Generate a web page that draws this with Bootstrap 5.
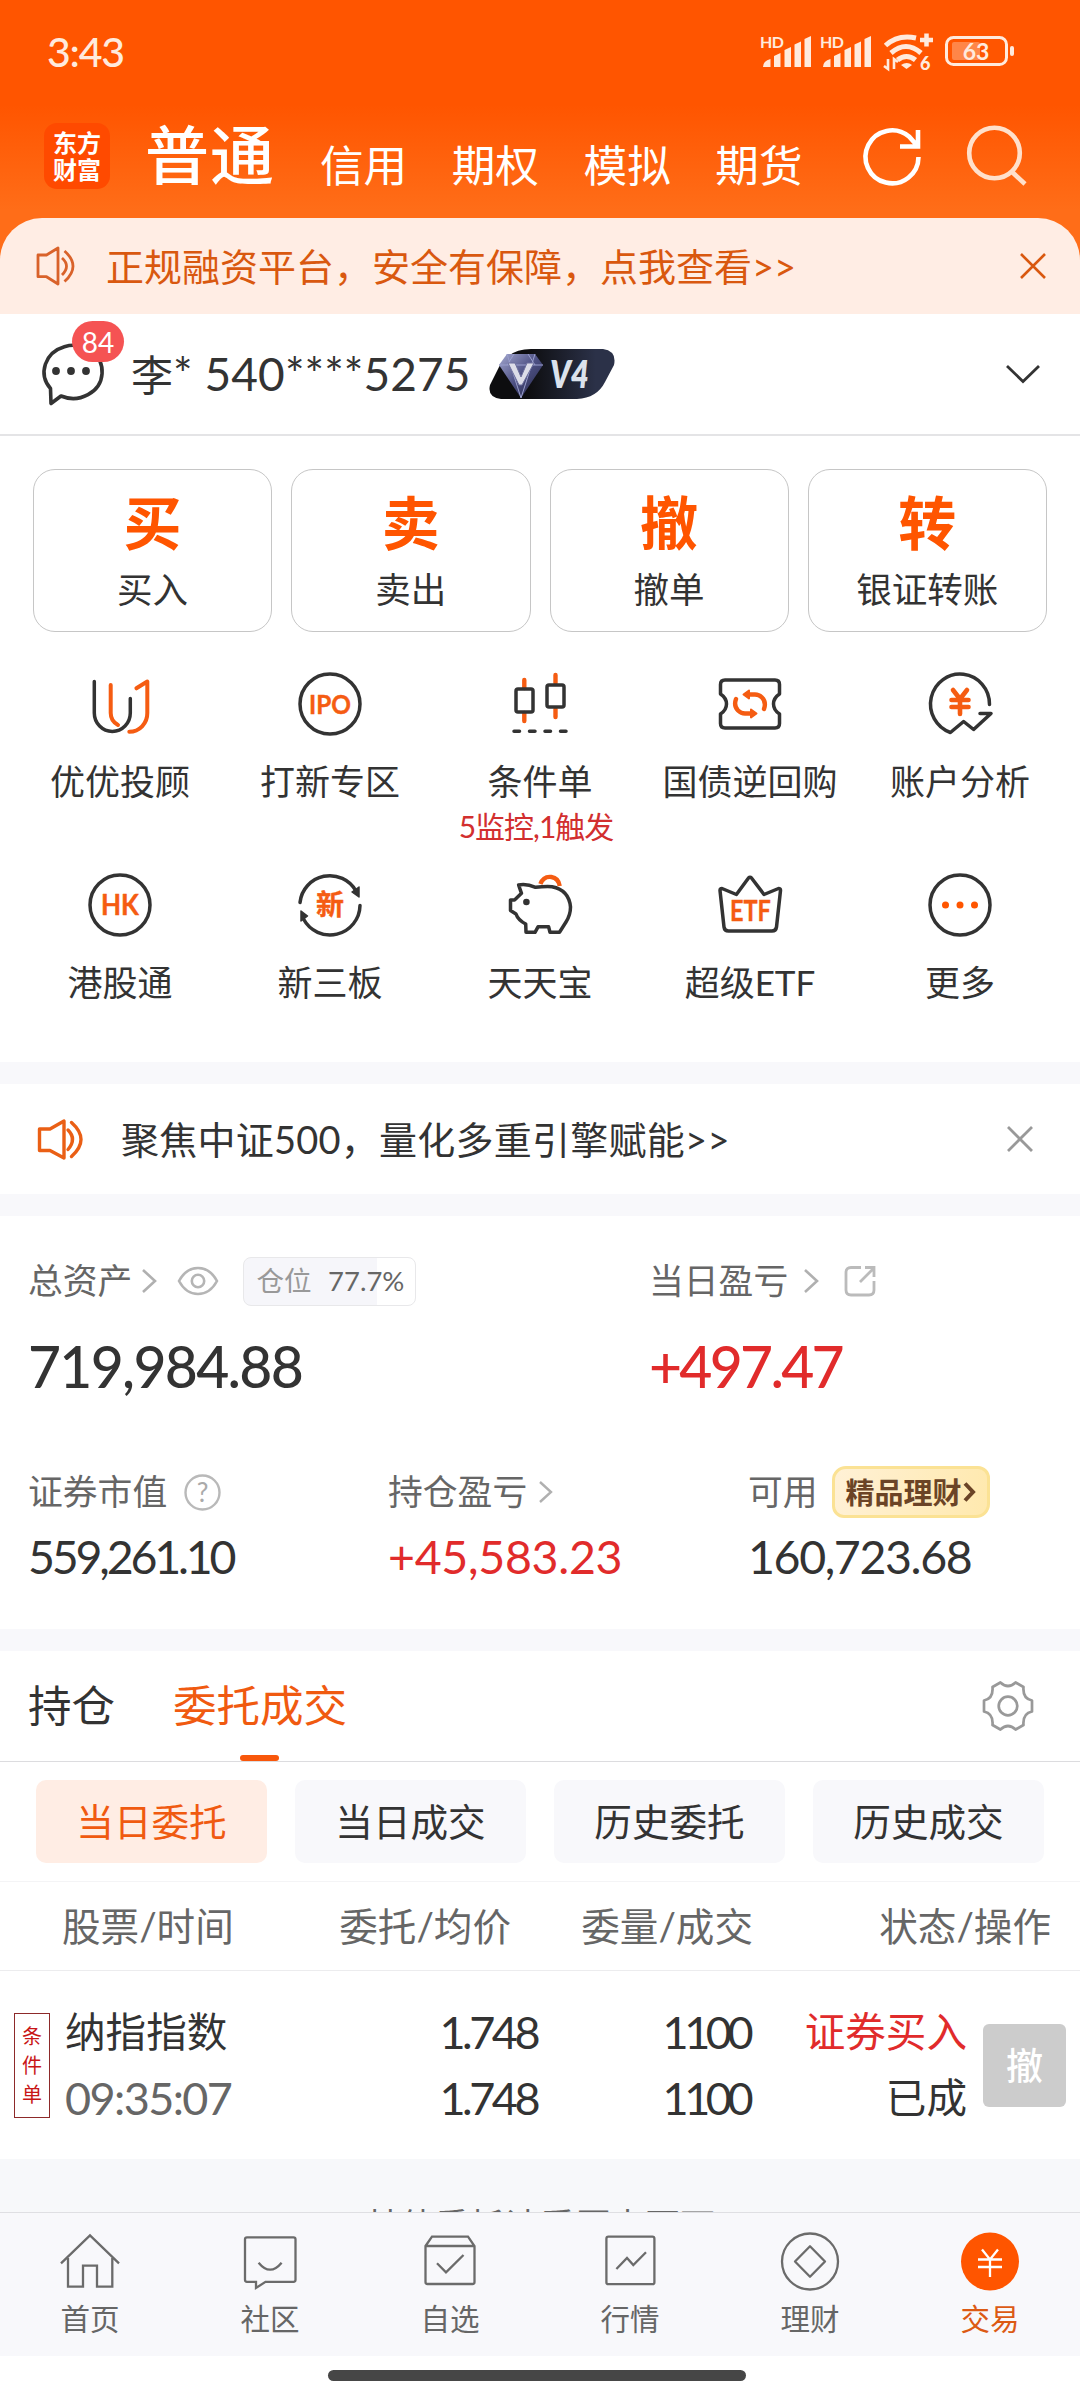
<!DOCTYPE html>
<html lang="zh-CN">
<head>
<meta charset="utf-8">
<meta name="viewport" content="width=device-width, initial-scale=1">
<title>交易</title>
<link href="https://cdn.jsdelivr.net/npm/bootstrap@5.3.0/dist/css/bootstrap.min.css" rel="stylesheet">
<style>
:root{--brand:#ff5500;--ink:#333;--sub:#666;--up:#e12b2b;--band:#f8f8fb}
body{font-family:Lato,"Noto Sans CJK SC",sans-serif;color:var(--ink);width:1080px;height:2400px;overflow:hidden;line-height:1;background:#fff}
svg{display:block;flex:none;overflow:visible}
.screen{height:2400px}
.top-area{height:314px;background:linear-gradient(#ff5500 0 105px,#ff6d18 210px)}
.status{height:104px;padding:0 66px 0 47px;color:#ffeadd}
.clock{font-size:41px;font-weight:500;letter-spacing:-1.2px;padding-bottom:2px}
.brand-row{height:114px;padding:0 55px 0 44px}
.logo{width:66px;height:66px;border-radius:13px;background:#ff4a00;color:#fff;font-weight:700;font-size:24px;line-height:27px;margin-top:-11px}
.big-tab{font-size:64px;margin:-12px 0 0 35px;font-weight:500;letter-spacing:1px}
.mid-tabs{font-size:43.6px;gap:44.6px;margin:10px 0 0 45px}
.notice{height:96px;border-radius:42px 42px 0 0;background:#ffede4;color:#d9580f;padding:0 34px 0 36px;font-size:38px}
.notice2{height:110px;padding:0 47px 0 37px;font-size:38px;letter-spacing:.25px}
.user-row{height:122px;border-bottom:2px solid #e4e4e6;padding:0 40px 0 38px}
.user-name{font-size:42px;margin-left:31px}
.user-name .num{font-size:46px;letter-spacing:.1px}
.msg-count{position:absolute;left:34px;top:-21px;width:52px;height:41px;border-radius:21px;background:#f55353;color:#fff;font-size:28px}
.quick{padding:33px 33px 0;gap:19px;height:196px}
.quick>div{flex:1 1 0;height:163px;border:1px solid #c6c6c6;border-radius:22px;padding-top:22px}
.quick b{font-size:58px;font-weight:700;color:var(--brand);line-height:62px}
.quick span{font-size:35.500px;margin-top:18px}
.svc{padding:40px 15px 0;height:430px}
.svc .cell{width:210px;height:201px}
.svc .cell span{font-size:35px;margin-top:27px;line-height:36px}
.svc .cell small{font-size:30px;color:#d22f2f;margin-top:12px;line-height:30px;letter-spacing:-1px;padding-right:8px}
.band{height:22px;background:var(--band);flex:none}
.assets{height:413px;padding:35px 28px 0}
.lbl{font-size:34.8px;color:var(--sub);height:60px}
.pos-tag{width:173px;height:49px;border:1.5px solid #e8e8ea;border-radius:8px;font-size:27.5px;color:var(--sub);background:linear-gradient(90deg,#f6f6fa 78%,#fff 78%);padding:0 11px 0 12px;margin-left:24px}
.total{font-size:57px;font-weight:500;height:60px;line-height:60px;margin-top:25px}
.val{font-size:46.5px;height:50px;line-height:50px;margin-top:9px}
.up{color:var(--up)}
.gold{width:158px;height:52px;border-radius:14px 12px 14px 12px;border:3px solid #fbe294;background:linear-gradient(100deg,#fff1d6,#ffe9ae);color:#6b4426;font-weight:700;font-size:29px;padding-left:11px;margin-left:14px}
.seg{height:111px;border-bottom:1.5px solid #dcdcdf;padding:0 47px 0 28px;font-size:43.5px}
.seg .on{color:#f05a10;margin-left:58px;height:100%}
.seg .on i{position:absolute;left:50%;bottom:0;width:39px;height:6px;margin-left:-20px;border-radius:3px;background:#f8570b}
.pills{height:120px;padding:0 36px;gap:28px;border-bottom:1px solid #f4f4f6}
.pills>div{flex:1 1 0;height:83px;border-radius:10px;background:var(--band);font-size:37.6px}
.pills>.on{background:#ffede4;color:#f05a10}
.thead-row{height:89px;border-bottom:1px solid #ececee;font-size:38.6px;color:var(--sub);padding-left:62px}
.order{height:188px;font-size:40.6px;padding-left:14px}
.order .ln{height:66px}
.order .num{font-size:45px}
.cond{width:36px;height:105px;border:1px solid #8d2a2a;color:#c81616;font-size:20px;line-height:29px}
.cancel{width:83px;height:83px;border-radius:6px;background:#ccc;color:#fff;font-size:37px;font-weight:500;margin-left:16px}
.tail{height:53px;background:#f7f8fa;overflow:hidden;color:var(--sub);font-size:35px}
.tail div{padding-top:49px}
.tabs-bottom{height:144px;background:var(--band);border-top:1px solid #dfdfe3;color:var(--sub);font-size:29.5px}
.tabs-bottom .it{width:180px;padding-top:18px}
.tabs-bottom .it span{margin-top:12px;line-height:32px}
.tabs-bottom svg{fill:none;stroke:#6b6b6b;stroke-width:2.3}
.home-bar{width:418px;height:11px;border-radius:6px;background:#464646;margin:14px 0 0 328px}
.ic{fill:none;stroke:#333;stroke-width:3.5;stroke-linecap:round;stroke-linejoin:round}
.ic .o{stroke:#f55c12}
.ic text{stroke:#f55c12;stroke-width:.4;fill:#f55c12;font-weight:700;text-anchor:middle}
</style>
</head>
<body>
<div class="screen d-flex flex-column">
  <header class="top-area flex-shrink-0">
    <div class="status d-flex align-items-center justify-content-between">
      <div class="clock">3:43</div>
      <svg width="256" height="40" viewBox="758 32 256 40" fill="#ffeadd">
        <g id="sig"><text x="760" y="48" font-size="16" font-weight="700" textLength="24">HD</text>
          <path d="M763 67q0-6 7.500-8v8zM774 56l6.500-3v14H774zM784.500 50l6.500-3v20h-6.500zM794.500 44.500l6.500-3V67h-6.500zM804.500 39l6.500-3V67h-6.500z"/></g>
        <use href="#sig" x="60"/>
        <g fill="none" stroke="#ffeadd" stroke-width="5"><path d="M885.500 45.500Q898 34 916 38M891 53q15-13 30 0M897.500 60q9-7 18 0"/></g>
        <path d="M901 65q6-4 11 0l-5.500 4z"/><path d="M920 40h13M926.500 33.500v13" stroke="#ffeadd" stroke-width="4.500"/>
        <path d="M888 59v10l-4-3M894 69V59l4 3" fill="none" stroke="#ffeadd" stroke-width="2.600"/>
        <text x="920" y="70" font-size="18" font-weight="900">6</text>
        <rect x="952" y="42" width="28" height="18" rx="2" fill="#ff8648"/>
        <rect x="946.500" y="37.500" width="60" height="27" rx="7" fill="none" stroke="#ffeadd" stroke-width="3"/>
        <rect x="1010" y="46" width="4" height="10" rx="2"/>
        <text x="976" y="60" font-size="23" font-weight="700" text-anchor="middle">63</text>
      </svg>
    </div>
    <div class="brand-row d-flex align-items-center text-white">
      <div class="logo d-flex flex-column align-items-center justify-content-center"><div>东方</div><div>财富</div></div>
      <div class="big-tab">普通</div>
      <div class="mid-tabs d-flex"><span>信用</span><span>期权</span><span>模拟</span><span>期货</span></div>
      <svg class="ms-auto" width="162" height="60" viewBox="863 126 162 60" style="margin-top:-11px" fill="none" stroke-width="4.600">
        <path d="M918.500 157A26.500 26.500 0 1 1 909 136.500l9 10M918 130v16.500h-18" stroke="#fff"/>
        <g stroke="#ffe0cb"><circle cx="994.500" cy="153" r="25.300"/><path d="M1011 171l14 13"/></g>
      </svg>
    </div>
    <div class="notice d-flex align-items-center">
      <svg width="40" height="40" fill="none" stroke="#d9622a" stroke-width="2.800" stroke-linejoin="round"><path d="M2 9h8.500L22 2v36l-11.500-7.300H2zM26 12q9 8 0 17M28.500 5q17 15 0 30.500"/></svg>
      <div style="margin-left:30px">正规融资平台，安全有保障，点我查看&gt;&gt;</div>
      <svg class="ms-auto" width="26" height="26" fill="none" stroke="#d9580f" stroke-width="2.600"><path d="M1 1l24 24M25 1L1 25"/></svg>
    </div>
  </header>

  <div class="user-row d-flex align-items-center flex-shrink-0">
    <div class="position-relative">
      <svg width="62" height="64" fill="none" stroke="#333" stroke-width="3.600"><path d="M12.500 46.500A29 26.500 0 1 1 23 54L13 61.500z" stroke-linejoin="round"/><g fill="#333" stroke="none"><circle cx="18" cy="29" r="3.900"/><circle cx="33" cy="29" r="3.900"/><circle cx="48" cy="29" r="3.900"/></g></svg>
      <div class="msg-count d-flex align-items-center justify-content-center">84</div>
    </div>
    <div class="user-name">李<span class="num">* 540****5275</span></div>
    <svg width="126" height="50" style="margin-left:18px">
      <defs><linearGradient id="pb"><stop offset=".3" stop-color="#0d0d0f"/><stop offset=".85" stop-color="#2b3148"/></linearGradient>
      <linearGradient id="dm" x2="1" y2="1"><stop stop-color="#a3a7cf"/><stop offset=".5" stop-color="#4c4f82"/><stop offset="1" stop-color="#232543"/></linearGradient></defs>
      <path d="M42 0h72q14 2 11 16l-9 17Q108 49 88 50H12Q-2 48 1 36l9-18Q20 0 42 0z" fill="url(#pb)"/>
      <path d="M18 5h28l8 11-22 33L10 16z" fill="url(#dm)"/><path d="M10 16h44M18 5l14 44L46 5M25 5l-7 11M39 5l7 11" stroke="#9a9fcd" stroke-width="1" fill="none"/>
      <path d="M19 14h7l6 14 6-14h7L33 36h-3z" fill="#dcdde8" stroke="#6c6f9c"/>
      <text x="61" y="39" font-size="38" font-weight="800" font-style="italic" fill="#dbe2ec" textLength="39" lengthAdjust="spacingAndGlyphs">V4</text>
    </svg>
    <svg class="ms-auto" width="34" height="18" fill="none" stroke="#333" stroke-width="2.800"><path d="M1 1l16 15.500L33 1"/></svg>
  </div>

  <section class="quick d-flex flex-shrink-0 text-center">
    <div class="d-flex flex-column"><b>买</b><span>买入</span></div>
    <div class="d-flex flex-column"><b>卖</b><span>卖出</span></div>
    <div class="d-flex flex-column"><b>撤</b><span>撤单</span></div>
    <div class="d-flex flex-column"><b>转</b><span>银证转账</span></div>
  </section>

  <section class="svc d-flex flex-wrap align-content-start flex-shrink-0">
    <div class="cell d-flex flex-column align-items-center">
      <svg class="ic" width="64" height="64"><path d="M6.300 9.500V41a18 18.500 0 0 0 36 0V26.500"/><path class="o" stroke-width="4" d="M22.700 13v28q0 8 7.300 12M48.400 16.300L59.300 9.500V41a18 18.500 0 0 1-18 18.800"/></svg>
      <span>优优投顾</span></div>
    <div class="cell d-flex flex-column align-items-center">
      <svg class="ic" width="64" height="64"><circle cx="32" cy="32" r="30"/><text x="32" y="41.500" font-size="27" textLength="42" lengthAdjust="spacingAndGlyphs" stroke-width="1">IPO</text></svg>
      <span>打新专区</span></div>
    <div class="cell d-flex flex-column align-items-center">
      <svg class="ic" width="64" height="64"><path class="o" stroke-width="4.400" d="M16.300 8v8M16.300 41v8M47.500 3v8M47.500 37v8"/><rect x="8" y="17" width="17" height="23" rx="2"/><rect x="39" y="13" width="17" height="22" rx="2"/><path d="M6 59.300h5.500M21.500 59.300H27M37 59.300h5.500M52.500 59.300H58"/></svg>
      <span>条件单</span><small>5监控,1触发</small></div>
    <div class="cell d-flex flex-column align-items-center">
      <svg class="ic" width="64" height="64"><path d="M7 8h50q4.500 0 4.500 4.500V22q-6 4-6 10t6 10v9.500q0 4.500-4.500 4.500H7q-4.500 0-4.500-4.500V42q6-4 6-10t-6-10v-9.500Q2.500 8 7 8z"/><g class="o" stroke-width="4.400"><path d="M18 27q-2.500 7 2 11.500 3 3 7 3H35M46 37q2.500-7-2-11.500-3-3-7-3H29"/><path d="M33 37.500l5.500 4-5.500 4zM31 18.500l-5.500 4 5.500 4z" fill="#f55c12" stroke-width="2"/></g></svg>
      <span>国债逆回购</span></div>
    <div class="cell d-flex flex-column align-items-center">
      <svg class="ic" width="64" height="64"><path d="M61.500 32.500A29.500 30 0 1 0 22.400 60.500L35.600 49.500l10 8L63 41.500H52"/><g class="o" stroke-width="4.600"><path d="M25 18l7 9 7-9M32 27v15M23.500 28h17M23.500 35h17"/></g></svg>
      <span>账户分析</span></div>
    <div class="cell d-flex flex-column align-items-center">
      <svg class="ic" width="64" height="64"><circle cx="32" cy="32" r="30"/><text x="32" y="42" font-size="28" textLength="38" lengthAdjust="spacingAndGlyphs">HK</text></svg>
      <span>港股通</span></div>
    <div class="cell d-flex flex-column align-items-center">
      <svg class="ic" width="64" height="64"><path d="M2 29.500A30 30 0 0 1 58 18M62 32.500A30 30 0 0 1 5.500 46"/><path d="M61 14v10l-7-5zM3 38v10l6.500-5z" fill="#333" stroke-width="1.500"/><text x="32" y="42" font-size="28">新</text></svg>
      <span>新三板</span></div>
    <div class="cell d-flex flex-column align-items-center">
      <svg class="ic" width="64" height="64"><path d="M10.600 12q8-1.500 17 2.300 9-1 16.400-.6Q61 17 62.500 34q0 8-4.500 15l-6.500 10.300H42l-1.400-5.500H30l-3 5.500h-9l-.3-8.300Q10 47 8 41l-5.500-3.500V27h4l7-6.700z"/><circle cx="18.400" cy="29" r="3.300" fill="#333" stroke="none"/><path class="o" stroke-width="4.400" stroke-linecap="butt" d="M32.400 11q3-8 11-7 7 1 8.300 9"/></svg>
      <span>天天宝</span></div>
    <div class="cell d-flex flex-column align-items-center">
      <svg class="ic" width="64" height="64"><path d="M4 15.500l14.400 6L30.500 5q1.500-1.500 3 0L46 21.500l14.500-6q2.200 0 2 2L58.500 54q-.5 4-4.500 4H10.500q-4 0-4.500-4L2 17.500q0-2 2-2z"/><text x="32.400" y="47.500" font-size="28" textLength="41" lengthAdjust="spacingAndGlyphs">ETF</text></svg>
      <span>超级ETF</span></div>
    <div class="cell d-flex flex-column align-items-center">
      <svg class="ic" width="64" height="64"><circle cx="32" cy="32" r="30"/><g fill="#ff5500" stroke="none"><circle cx="17.500" cy="32" r="3.500"/><circle cx="32" cy="32" r="3.500"/><circle cx="46.500" cy="32" r="3.500"/></g></svg>
      <span>更多</span></div>
  </section>

  <div class="band"></div>
  <div class="notice2 d-flex align-items-center flex-shrink-0">
    <svg width="48" height="43" fill="none" stroke="#ea5f15" stroke-width="3.400" stroke-linejoin="round" stroke-linecap="round"><path d="M2.500 11H13L27 3v37L13 32.500H2.500zM31 12q9 9 0 19.500M34.500 4.500q19 17 0 34"/></svg>
    <div style="margin-left:36px">聚焦中证500，量化多重引擎赋能&gt;&gt;</div>
    <svg class="ms-auto" width="26" height="26" fill="none" stroke="#999" stroke-width="2.800"><path d="M1 1l24 24M25 1L1 25"/></svg>
  </div>
  <div class="band"></div>

  <section class="assets flex-shrink-0">
    <div class="d-flex">
      <div style="width:621px">
        <div class="lbl d-flex align-items-center">总资产
          <svg width="14" height="24" style="margin-left:10px" fill="none" stroke="#b0b0b0" stroke-width="2.600"><path d="M1 1l12 11L1 23"/></svg>
          <svg width="42" height="30" style="margin-left:21px" fill="none" stroke="#b5b5b5" stroke-width="2.600"><path d="M2 15Q9 2 21 2t19 13Q33 28 21 28T2 15z"/><circle cx="21" cy="15" r="6.200"/></svg>
          <div class="pos-tag d-flex align-items-center justify-content-between"><span style="color:#999">仓位</span><span>77.7%</span></div>
        </div>
        <div class="total" style="letter-spacing:-1.700px">719,984.88</div>
      </div>
      <div>
        <div class="lbl d-flex align-items-center">当日盈亏
          <svg width="14" height="24" style="margin-left:16px" fill="none" stroke="#b0b0b0" stroke-width="2.600"><path d="M1 1l12 11L1 23"/></svg>
          <svg width="32" height="32" style="margin-left:26px" fill="none" stroke="#bbb" stroke-width="2.800"><path d="M17 2.500H7Q2 2.500 2 7.500V25q0 5 5 5h18q5 0 5-5V16M16 17L30 3M21 2.500h9V12"/></svg>
        </div>
        <div class="total up" style="letter-spacing:-2.700px">+497.47</div>
      </div>
    </div>
    <div class="d-flex" style="margin-top:66px">
      <div style="width:360px">
        <div class="lbl d-flex align-items-center">证券市值
          <svg width="37" height="37" style="margin-left:17px"><circle cx="18.500" cy="18.500" r="17" fill="none" stroke="#b9b9b9" stroke-width="2.400"/><text x="18.500" y="27.500" font-size="26" fill="#aaa" text-anchor="middle">?</text></svg></div>
        <div class="val" style="letter-spacing:-3.200px">559,261.10</div>
      </div>
      <div style="width:360px">
        <div class="lbl d-flex align-items-center">持仓盈亏
          <svg width="13" height="22" style="margin-left:12px" fill="none" stroke="#b0b0b0" stroke-width="2.400"><path d="M1 1l11 10L1 21"/></svg></div>
        <div class="val up" style="letter-spacing:-.300px">+45,583.23</div>
      </div>
      <div>
        <div class="lbl d-flex align-items-center">可用
          <div class="gold d-flex align-items-center">精品理财<svg width="11" height="20" style="margin-left:2px" fill="none" stroke="#6b4426" stroke-width="4"><path d="M1 1.500l8 8.500-8 8.500"/></svg></div></div>
        <div class="val" style="letter-spacing:-1.400px">160,723.68</div>
      </div>
    </div>
  </section>
  <div class="band"></div>

  <div class="seg d-flex align-items-center flex-shrink-0">
    <div>持仓</div>
    <div class="on position-relative d-flex align-items-center">委托成交<i></i></div>
    <svg class="ms-auto" width="50" height="50" viewBox="-25 -25 50 50" fill="none" stroke="#999" stroke-width="2.700" stroke-linejoin="round"><circle r="9.300"/><path d="M-7.600-23.500Q0-16.500 7.600-23.500L15.500-19Q14.500-7.500 24-5.500V5.500Q14.500 7.500 15.500 19L7.600 23.500Q0 16.500-7.600 23.500L-15.500 19Q-14.500 7.500-24 5.500V-5.500Q-14.500-7.500-15.500-19z"/></svg>
  </div>
  <div class="pills d-flex align-items-center flex-shrink-0">
    <div class="on d-flex align-items-center justify-content-center">当日委托</div>
    <div class="d-flex align-items-center justify-content-center">当日成交</div>
    <div class="d-flex align-items-center justify-content-center">历史委托</div>
    <div class="d-flex align-items-center justify-content-center">历史成交</div>
  </div>
  <div class="thead-row d-flex align-items-center flex-shrink-0">
    <div style="width:200px">股票/时间</div>
    <div class="text-end" style="width:249px">委托/均价</div>
    <div class="text-end" style="width:242px">委量/成交</div>
    <div class="text-end" style="width:298px">状态/操作</div>
  </div>
  <div class="order d-flex align-items-center flex-shrink-0">
    <div class="cond d-flex flex-column align-items-center justify-content-center"><span>条</span><span>件</span><span>单</span></div>
    <div style="width:200px;margin-left:15px">
      <div class="ln d-flex align-items-center">纳指指数</div>
      <div class="ln d-flex align-items-center num" style="color:#666;letter-spacing:-1.600px">09:35:07</div>
    </div>
    <div class="num" style="width:275px;letter-spacing:-3.500px;padding-right:3px">
      <div class="ln d-flex align-items-center justify-content-end">1.748</div>
      <div class="ln d-flex align-items-center justify-content-end">1.748</div>
    </div>
    <div class="num" style="width:213px;letter-spacing:-4.500px;padding-right:4px">
      <div class="ln d-flex align-items-center justify-content-end">1100</div>
      <div class="ln d-flex align-items-center justify-content-end">1100</div>
    </div>
    <div style="width:214px">
      <div class="ln d-flex align-items-center justify-content-end up">证券买入</div>
      <div class="ln d-flex align-items-center justify-content-end">已成</div>
    </div>
    <div class="cancel d-flex align-items-center justify-content-center">撤</div>
  </div>
  <div class="tail text-center flex-shrink-0"><div>其他委托请看历史页面</div></div>

  <nav class="tabs-bottom d-flex flex-shrink-0">
    <div class="it d-flex flex-column align-items-center"><svg width="60" height="60"><path d="M1 32.300L30 4.300l29 28M8 27v28.700h15v-21h14v21h15.300V27"/></svg><span>首页</span></div>
    <div class="it d-flex flex-column align-items-center"><svg width="60" height="60"><path d="M7 6.300h46.500q2 0 2 2v40.500q0 2-2 2h-28L16 57v-6.200H7q-2 0-2-2V8.300q0-2 2-2zM18.600 31.700q11.500 14 23 0"/></svg><span>社区</span></div>
    <div class="it d-flex flex-column align-items-center"><svg width="60" height="60"><path d="M5.500 15L12 5.700h36L54.500 15v36q0 2-2 2h-45q-2 0-2-2zH54.500M17 32.300l9 9L43.500 24"/></svg><span>自选</span></div>
    <div class="it d-flex flex-column align-items-center"><svg width="60" height="60"><rect x="6.400" y="5.700" width="48" height="47.500" rx="2"/><path d="M16.400 38L27 27l6.300 7L46 21.300"/></svg><span>行情</span></div>
    <div class="it d-flex flex-column align-items-center"><svg width="60" height="60"><circle cx="30" cy="30.500" r="28"/><path d="M30 15.300l15 15.200-15 15.200-15-15.200z" stroke-linejoin="round"/></svg><span>理财</span></div>
    <div class="it d-flex flex-column align-items-center" style="color:#dc5a14"><svg width="60" height="60"><circle cx="30" cy="30.500" r="29" fill="#ff5500" stroke="none"/><path d="M22 18.500l8 10 8-10M30 28.500V46M18 28.500h24M18 36h24" stroke="#fff"/></svg><span>交易</span></div>
  </nav>
  <div class="home-bar flex-shrink-0"></div>
</div>
<script src="https://cdn.jsdelivr.net/npm/bootstrap@5.3.0/dist/js/bootstrap.bundle.min.js"></script>
</body>
</html>
